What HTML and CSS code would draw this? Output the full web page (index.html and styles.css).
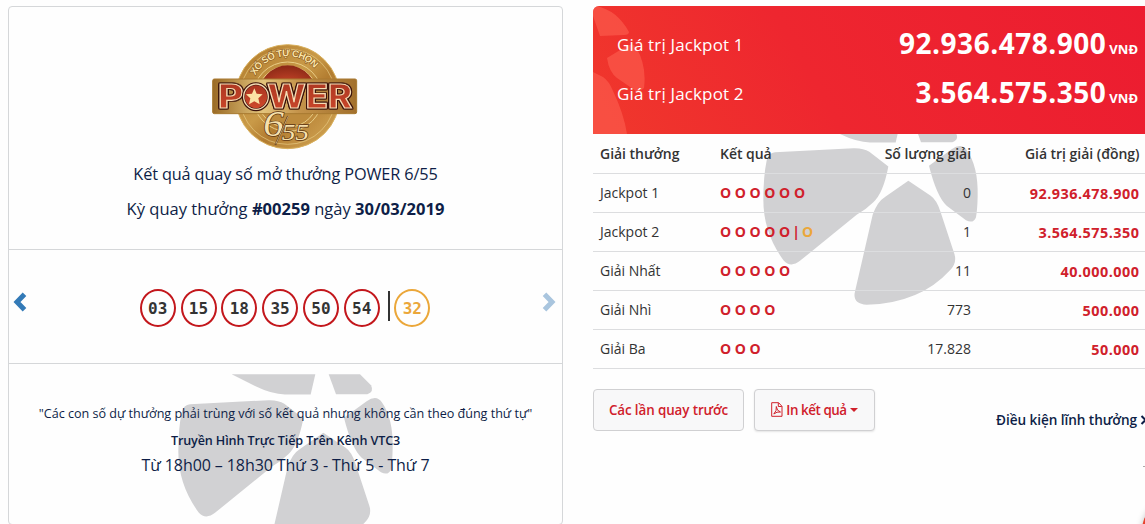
FILE: index.html
```html
<!DOCTYPE html>
<html lang="vi">
<head>
    <meta charset="UTF-8">
    <meta name="viewport" content="width=device-width, initial-scale=1.0">
    <title>Kết quả quay số mở thưởng POWER 6/55</title>
    <link rel="stylesheet" href="styles.css">
</head>
<body>
    <svg class="defs" width="0" height="0">
        <symbol id="petals" viewBox="0 -23 1215 743">
            <path d="M230 -23H481L467 38H390Q350 37 305 15Z"/>
            <path d="M521 -23H615L648 10Q658 30 637 37H543Z"/>
            <path d="M105 67L340 55Q370 54 388 66L445 110Q430 190 400 217Q380 237 350 255L180 393Q152 415 131 392Q70 310 70 210Q70 140 80 92Q86 68 105 67Z"/>
            <path d="M567 108L635 58Q665 37 681 62Q715 110 713 200Q712 240 708 262Q700 283 678 271L620 228Q590 200 567 108Z"/>
            <path d="M505 153L572 198Q590 210 602 247L643 372Q652 400 630 421Q540 520 380 525Q336 522 345 485L398 255Q412 215 437 200Z"/>
        </symbol>
    </svg>

    <div class="page">
        <section class="card">
            <div class="card-top">
                <svg class="logo" viewBox="0 0 510 360">
                    <defs>
                        <linearGradient id="gold" x1="0" y1="0" x2="1" y2="1">
                            <stop offset="0" stop-color="#b07a2c"/>
                            <stop offset=".45" stop-color="#c99a48"/>
                            <stop offset=".6" stop-color="#b27c30"/>
                            <stop offset="1" stop-color="#d9ae5c"/>
                        </linearGradient>
                        <linearGradient id="band" x1="0" y1="0" x2="1" y2="0">
                            <stop offset="0" stop-color="#9a6a25"/>
                            <stop offset=".35" stop-color="#e3c47c"/>
                            <stop offset=".6" stop-color="#c4934a"/>
                            <stop offset="1" stop-color="#a2702c"/>
                        </linearGradient>
                        <radialGradient id="sun" cx=".5" cy=".6" r=".55">
                            <stop offset="0" stop-color="#c9472a"/>
                            <stop offset="1" stop-color="#8f2a17"/>
                        </radialGradient>
                        <linearGradient id="red" x1="0" y1="0" x2="0" y2="1">
                            <stop offset="0" stop-color="#a83420"/>
                            <stop offset="1" stop-color="#cf4a2c"/>
                        </linearGradient>
                        <path id="arc" d="M166 122A108 108 0 0 1 356 118"/>
                    </defs>
                    <circle cx="263" cy="185" r="156" fill="url(#gold)" stroke="#d9b05c" stroke-width="3"/>
                    <circle cx="263" cy="185" r="143" fill="none" stroke="#e9cd86" stroke-width="2"/>
                    <circle cx="263" cy="185" r="104" fill="none" stroke="#e9cd86" stroke-width="3"/>
                    <circle cx="263" cy="185" r="92" fill="#bd8b3d" stroke="#e9cd86" stroke-width="3"/>
                    <path d="M175 185A88 94 0 0 1 351 185Z" fill="url(#sun)"/>
                    <text class="logo-arc"><textPath href="#arc" textLength="210">XỔ SỐ TỰ CHỌN</textPath></text>
                    <rect x="38" y="132" width="432" height="104" rx="5" fill="url(#band)" stroke="#a87930" stroke-width="3"/>
                    <g class="logo-power">
                        <text x="54" y="220" textLength="76" lengthAdjust="spacingAndGlyphs">P</text>
                        <text x="202" y="220" textLength="254" lengthAdjust="spacingAndGlyphs">WER</text>
                    </g>
                    <ellipse cx="168" cy="185" rx="38" ry="39" fill="url(#red)" stroke="#3a120b" stroke-width="9"/>
                    <ellipse cx="168" cy="185" rx="37" ry="38" fill="none" stroke="#f6dcb4" stroke-width="4"/>
                    <path d="M163 160L170 176L188 178L175 190L179 208L163 199L147 208L151 190L138 178L156 176Z" fill="#fbe3a6"/>
                    <text class="logo-six" x="190" y="304" textLength="62" lengthAdjust="spacingAndGlyphs">6</text>
                    <path d="M264 243L226 330" stroke="#5b3312" stroke-width="5"/>
                    <path d="M265 243L227 328" stroke="#f3dca4" stroke-width="2"/>
                    <text class="logo-fifty" x="245" y="315" textLength="82" lengthAdjust="spacingAndGlyphs">55</text>
                </svg>
                <p class="title">Kết quả quay số mở thưởng POWER 6/55</p>
                <p class="period">Kỳ quay thưởng <b>#00259</b> ngày <b>30/03/2019</b></p>
            </div>

            <div class="draw">
                <svg class="arrow" viewBox="0 0 14 20"><path d="M11.5 2.3L4 10L11.5 17.7"/></svg>
                <div class="balls">
                    <span class="ball">03</span>
                    <span class="ball">15</span>
                    <span class="ball">18</span>
                    <span class="ball">35</span>
                    <span class="ball">50</span>
                    <span class="ball">54</span>
                    <i class="split"></i>
                    <span class="ball gold">32</span>
                </div>
                <svg class="arrow next" viewBox="0 0 14 20"><path d="M2.5 2.3L10 10L2.5 17.7"/></svg>
            </div>

            <div class="note">
                <svg class="petals"><use href="#petals"/></svg>
                <p class="rule">"Các con số dự thưởng phải trùng với số kết quả nhưng không cần theo đúng thứ tự"</p>
                <p class="live">Truyền Hình Trực Tiếp Trên Kênh VTC3</p>
                <p class="time">Từ 18h00 – 18h30 Thứ 3 - Thứ 5 - Thứ 7</p>
            </div>
        </section>

        <section class="results">
            <div class="jackpots">
                <svg class="shine" viewBox="0 0 60 128">
                    <path d="M3 0Q24 4 36 26Q36 29 31 29L7 30L0 10V0Z"/>
                    <path d="M14 52L32 41Q40 36 43 41Q54 60 51 82Q46 88 40 83L24 72Q16 66 14 52Z"/>
                    <path d="M0 66L10 71Q16 75 20 85Q31 108 34 128H0Z"/>
                </svg>
                <div class="jackpot">
                    <span class="name">Giá trị Jackpot 1</span>
                    <span class="amount">92.936.478.900 <small>VNĐ</small></span>
                </div>
                <div class="jackpot">
                    <span class="name">Giá trị Jackpot 2</span>
                    <span class="amount">3.564.575.350 <small>VNĐ</small></span>
                </div>
            </div>

            <div class="prizes">
                <svg class="petals"><use href="#petals"/></svg>
                <table>
                    <thead>
                        <tr><th>Giải thưởng</th><th>Kết quả</th><th class="right">Số lượng giải</th><th class="right">Giá trị giải (đồng)</th></tr>
                    </thead>
                    <tbody>
                        <tr><td>Jackpot 1</td><td class="match">O O O O O O</td><td class="right">0</td><td class="value">92.936.478.900</td></tr>
                        <tr><td>Jackpot 2</td><td class="match">O O O O O<span class="bar">|</span><em>O</em></td><td class="right">1</td><td class="value">3.564.575.350</td></tr>
                        <tr><td>Giải Nhất</td><td class="match">O O O O O</td><td class="right">11</td><td class="value">40.000.000</td></tr>
                        <tr><td>Giải Nhì</td><td class="match">O O O O</td><td class="right">773</td><td class="value">500.000</td></tr>
                        <tr><td>Giải Ba</td><td class="match">O O O</td><td class="right">17.828</td><td class="value">50.000</td></tr>
                    </tbody>
                </table>
            </div>

            <div class="actions">
                <button class="btn previous">Các lần quay trước</button>
                <button class="btn print">
                    <svg class="pdf" viewBox="0 0 12 15"><path d="M.7 .7H7.6L11 4.3V14.3H.7ZM7.3 .9V4.5H10.8M2.8 12Q6 9 5.3 4.5Q5.7 9 9.5 10Q6 9.4 2.8 12"/></svg>
                    <span>In kết quả</span>
                    <i class="caret"></i>
                </button>
                <a class="terms" href="#">Điều kiện lĩnh thưởng<svg class="more" viewBox="0 0 8 10"><path d="M1.5 1L5.5 5L1.5 9"/></svg></a>
            </div>
        </section>
    </div>

    <i class="dash"></i>
    <i class="chat"></i>
</body>
</html>
```
FILE: styles.css
```css
* {
    box-sizing: border-box;
}

body {
    margin: 0;
    height: 524px;
    background: #fefefe;
    color: #333;
    font-family: "Open Sans", "Noto Sans", sans-serif;
    font-size: 14px;
    overflow: hidden;
}

p {
    margin: 0;
}

svg {
    display: block;
}

.defs {
    position: absolute;
}

.page {
    display: flex;
    gap: 30px;
    width: 1155px;
    height: 524px;
    padding: 6px 0 0 8px;
    overflow: hidden;
}

/* left card */
.card {
    width: 555px;
    height: 519px;
    flex: none;
    border: 1px solid #d5d7d9;
    border-radius: 4px;
    color: #0e1e47;
    text-align: center;
}

.card-top {
    height: 243px;
    padding-top: 28px;
    border-bottom: 1px solid #d5d7d9;
}

.logo {
    width: 170px;
    height: 120px;
    margin-left: 191px;
}

.logo-arc {
    font: bold 29px "Liberation Sans", sans-serif;
    fill: #fbe6a8;
    stroke: #7d4a18;
    stroke-width: 3px;
    paint-order: stroke;
}

.logo-power {
    font: 800 97px "Inter", sans-serif;
    fill: url(#red);
    stroke: #f6dcb4;
    stroke-width: 3.5px;
    filter: drop-shadow(3px 0 0 #3a120b) drop-shadow(-3px 0 0 #3a120b) drop-shadow(0 2px 0 #3a120b) drop-shadow(0 -2px 0 #3a120b);
}

.logo-six,
.logo-fifty {
    font: italic 96px "Liberation Serif", serif;
    fill: #f6e0ac;
    stroke: #5b3312;
    stroke-width: 4px;
    paint-order: stroke;
}

.logo-six {
    font-size: 108px;
}

.logo-fifty {
    font-size: 72px;
}

.title,
.period {
    line-height: 24px;
    white-space: nowrap;
}

.title {
    margin-top: 7px;
    font-size: 16.3px;
    letter-spacing: -.13px;
}

.period {
    margin-top: 11px;
    font-size: 16.5px;
    letter-spacing: .02px;
}

.draw {
    display: flex;
    align-items: center;
    justify-content: space-between;
    height: 114px;
    padding: 0 6px 0 4px;
    border-bottom: 1px solid #d5d7d9;
}

.arrow {
    width: 14px;
    height: 20px;
    margin-top: -9px;
    fill: none;
    stroke: #337ab7;
    stroke-width: 5;
}

.arrow.next {
    stroke: #a9c5de;
}

.balls {
    display: flex;
    align-items: center;
    gap: 4.8px;
    margin: 3px 0 0 1px;
}

.ball {
    width: 36px;
    height: 38px;
    border: 2px solid #c3171c;
    border-radius: 50%;
    color: #333;
    font: bold 16px/35px "DejaVu Sans Mono", monospace;
}

.ball.gold {
    border-color: #eba73a;
    color: #eba73a;
}

.split {
    width: 2px;
    height: 30px;
    margin: -4px -1px 0 4px;
    background: #333;
}

.note {
    position: relative;
    padding-top: 38px;
    white-space: nowrap;
}

.petals {
    position: absolute;
    width: 405px;
    height: 248px;
    fill: #d1d1d3;
    z-index: -1;
}

.note .petals {
    left: 146px;
    top: 10px;
}

.rule {
    font-size: 12.6px;
    letter-spacing: -.02px;
    line-height: 24px;
}

.live {
    margin-top: 3px;
    font-size: 12.6px;
    font-weight: 600;
    letter-spacing: -.13px;
    line-height: 24px;
}

.time {
    font-size: 16px;
    letter-spacing: -.09px;
    line-height: 24px;
}

/* right column */
.results {
    width: 555px;
    flex: none;
}

.jackpots {
    position: relative;
    height: 128px;
    padding: 13px 10px 0 24px;
    border-radius: 6px 0 0 0;
    background: linear-gradient(60deg, #f0382c 0%, #ee262f 40%, #ec1c30 100%);
    color: #fff;
    overflow: hidden;
}

.shine {
    position: absolute;
    left: 0;
    top: 0;
    width: 60px;
    height: 128px;
    fill: #fb5a4c;
    opacity: .7;
}

.jackpot {
    position: relative;
    display: flex;
    justify-content: space-between;
    height: 49px;
    line-height: 49px;
    white-space: nowrap;
}

.name {
    margin-top: 1px;
    font-size: 17px;
    letter-spacing: .15px;
}

.amount {
    display: flex;
    align-items: baseline;
    gap: 3px;
    font-size: 28px;
    font-weight: bold;
    letter-spacing: .52px;
}

.amount small {
    font-size: 13px;
    letter-spacing: 0;
}

.prizes {
    position: relative;
}

.prizes .petals {
    left: 147px;
    top: -12px;
    clip-path: inset(12px 0 0 0);
}

table {
    width: 100%;
    border-collapse: collapse;
    table-layout: fixed;
}

th,
td {
    height: 39px;
    padding: 0 8px 0 7px;
    border-bottom: 1px solid #dcdddf;
    text-align: left;
    white-space: nowrap;
}

th {
    font-weight: 600;
    letter-spacing: -.03px;
}

th:nth-child(1) {
    width: 120px;
}

th:nth-child(2) {
    width: 124px;
}

th:nth-child(3) {
    width: 142px;
}

th:last-child,
td:last-child {
    padding-right: 8.5px;
}

.right,
.value {
    text-align: right;
}

.match,
.value {
    color: #d0202b;
    font-weight: bold;
}

.value {
    padding-top: 1px;
    font-size: 14.4px;
    letter-spacing: .5px;
}

.bar {
    margin: 0 2px;
}

.match em {
    color: #eba73a;
    font-style: normal;
}

.actions {
    display: flex;
    align-items: flex-start;
    gap: 10px;
    margin-top: 20px;
}

.btn {
    display: flex;
    flex: none;
    align-items: center;
    justify-content: center;
    gap: 3px;
    height: 42px;
    padding: 0;
    border: 1px solid #d0d0d2;
    border-radius: 4px;
    background: #f8f8f9;
    color: #d0202b;
    font: 600 13.4px "Open Sans", "Noto Sans", sans-serif;
    letter-spacing: -.1px;
    white-space: nowrap;
}

.previous {
    width: 151px;
}

.print {
    width: 121px;
    box-shadow: 0 1px 2px rgba(0, 0, 0, .1);
}

.print span {
    letter-spacing: -.45px;
}

.pdf {
    width: 12px;
    height: 15px;
    fill: none;
    stroke: #d0202b;
}

.caret {
    border: 4px solid transparent;
    border-top-color: #d0202b;
    border-bottom: 0;
}

.terms {
    display: flex;
    flex: none;
    align-items: center;
    gap: 3px;
    margin: 22px 0 0 111px;
    color: #0e1e47;
    font-size: 13.6px;
    font-weight: 600;
    letter-spacing: -.06px;
    line-height: 18px;
    text-decoration: none;
    white-space: nowrap;
}

.more {
    width: 8px;
    height: 10px;
    fill: none;
    stroke: #0e1e47;
    stroke-width: 2;
}

/* widgets peeking in from the right edge */
.dash {
    position: absolute;
    right: 0;
    top: 466px;
    width: 2px;
    height: 1px;
    background: #aaa;
}

.chat {
    position: fixed;
    left: 1142px;
    top: 500px;
    width: 60px;
    height: 60px;
    border-radius: 50%;
    background: #e8432f;
    box-shadow: 0 0 6px rgba(0, 0, 0, .25);
}
```
